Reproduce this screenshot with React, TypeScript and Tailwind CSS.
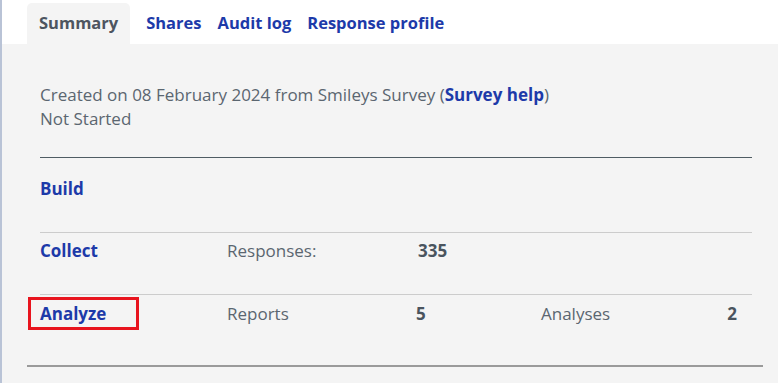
import React from "react";

export default function App() {
  const font = { fontFamily: "'Open Sans', 'Noto Sans', sans-serif" };
  return (
    <div className="w-[778px] h-[383px] overflow-hidden bg-white border-l-2 border-[#b9c3d6] text-[17px]" style={font}>
      <div className="h-[44px] flex items-end pl-[25px] text-[16.5px]">
        <div className="h-[41px] pb-[1px] px-[12px] flex items-center rounded-t-[5px] bg-[#f4f4f4] font-bold text-[#4d5560]">
          Summary
        </div>
        <div className="h-[41px] pb-[1px] flex items-center gap-[16px] ml-[16px] font-bold text-[#1d3aa9]">
          <span>Shares</span>
          <span>Audit log</span>
          <span>Response profile</span>
        </div>
      </div>
      <div className="h-[339px] bg-[#f4f4f4] pl-[25px] pr-[13px]">
        <div className="px-[13px] pt-[39px] text-[#5b6670]">
          <div className="leading-[24px]">
            Created on 08 February 2024 from Smileys Survey (
            <span className="font-bold text-[#1d3aa9]">Survey help</span>)
          </div>
          <div className="leading-[24px]">Not Started</div>
          <div className="mt-[26px] border-t border-[#4f5c63]" />
          <div className="h-[74px] pt-[19px] leading-[24px] font-bold text-[#1d3aa9]">Build</div>
          <div className="border-t border-[#cccccc]" />
          <div className="h-[61px] pt-[6px] leading-[24px] grid grid-cols-[187px_191px_123px_1fr]">
            <span className="font-bold text-[#1d3aa9]">Collect</span>
            <span>Responses:</span>
            <span className="font-bold text-[#4a545e]">335</span>
            <span />
          </div>
          <div className="border-t border-[#cccccc]" />
          <div className="h-[70px] pt-[7px] leading-[24px] grid grid-cols-[187px_189px_125px_1fr]">
            <span className="relative font-bold text-[#1d3aa9]">
              Analyze
              <span className="absolute left-[-12px] top-[-5px] w-[111px] h-[33px] border-[3px] border-[#e8141e]" />
            </span>
            <span>Reports</span>
            <span className="font-bold text-[#4a545e]">5</span>
            <span className="flex justify-between pr-[15px]">
              <span>Analyses</span>
              <span className="font-bold text-[#4a545e]">2</span>
            </span>
          </div>
        </div>
        <div className="border-t-2 border-[#9a9a9a] mr-[2px]" />
      </div>
    </div>
  );
}
